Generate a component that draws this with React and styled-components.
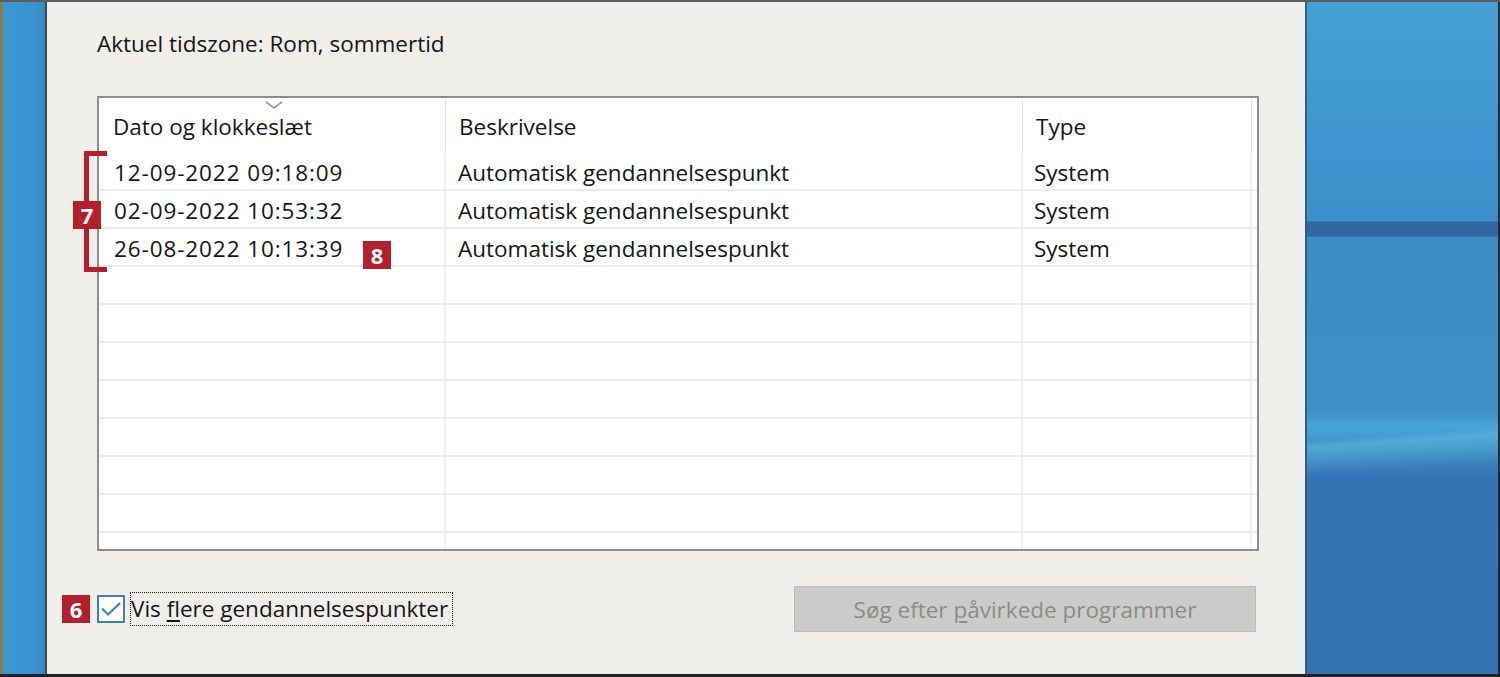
import React from 'react';
import styled, { createGlobalStyle } from 'styled-components';

const GlobalStyle = createGlobalStyle`
  html, body {
    margin: 0;
    padding: 0;
    background: #1e1e1e;
  }
  body {
    font-family: "Open Sans", "DejaVu Sans", sans-serif;
  }
`;

const RED = '#b51f2b';
const FONT_SIZE = '22.5px';

const Frame = styled.div`
  width: 1500px;
  height: 677px;
  display: flex;
  box-sizing: border-box;
  border-top: 2px solid #5d5d5d;
  border-bottom: 3px solid #222;
  overflow: hidden;
`;

const LeftStrip = styled.div`
  width: 47px;
  flex: none;
  box-sizing: border-box;
  border-left: 3px solid #8a7c4e;
  border-right: 2px solid #3f4a52;
  background: linear-gradient(90deg, #3b97d1 0%, #3a93cf 80%, #3787c2 100%);
`;

const Dialog = styled.div`
  flex: 1;
  background: #f0efec;
  position: relative;
  padding: 26px 46px 0 50px;
  display: flex;
  flex-direction: column;
`;

const Desktop = styled.div`
  width: 196px;
  flex: none;
  box-sizing: border-box;
  border-left: 2px solid #2c5f8e;
  border-right: 3px solid #2a2a2a;
  background:
    linear-gradient(176deg, transparent 0 64%, rgba(110, 190, 235, 0.45) 65%, transparent 69%),
    linear-gradient(180deg,
      #45a0d6 0px, #3f95cf 150px, #3c8fc9 219px,
      #2f67a5 220px, #2f67a5 234px,
      #3d8cc5 235px, #3f90c8 410px,
      #48a6da 424px, #3f95cc 440px, #3a85c0 458px, #3474b5 476px, #3372b3 677px);
`;

const Timezone = styled.div`
  font-size: ${FONT_SIZE};
  color: #161616;
  height: 32px;
  line-height: 32px;
`;

const ListView = styled.div`
  margin-top: 36px;
  width: 1162px;
  height: 455px;
  box-sizing: border-box;
  border: 2px solid #8e8e8e;
  background: #fff;
  overflow: hidden;
  position: relative;
`;

const COLS = '347px 577px 229px 5px';

const HeaderRow = styled.div`
  display: grid;
  grid-template-columns: ${COLS};
  height: 55px;
`;

const HeaderCell = styled.div`
  position: relative;
  font-size: ${FONT_SIZE};
  color: #161616;
  padding-left: ${(p) => p.$pad ?? 13}px;
  display: flex;
  align-items: center;
  padding-top: 1px;
  border-right: ${(p) => (p.$last ? 'none' : '1px solid #e3e3e3')};
  margin: 2px 0 2px;
`;

const SortArrow = styled.svg`
  position: absolute;
  top: 1px;
  left: 166px;
`;

const BodyRow = styled.div`
  display: grid;
  grid-template-columns: ${COLS};
  height: 38px;
  box-sizing: border-box;
  border-bottom: 2px solid #ececec;
`;

const Cell = styled.div`
  font-size: ${FONT_SIZE};
  color: #161616;
  letter-spacing: ${(p) => p.$spacing || 0}px;
  padding-left: ${(p) => p.$pad ?? 12}px;
  padding-top: 3px;
  display: flex;
  align-items: center;
  white-space: nowrap;
  border-right: ${(p) => (p.$last ? 'none' : '2px solid #efefef')};
`;

const Footer = styled.div`
  margin-top: 35px;
  width: 1162px;
  display: flex;
  align-items: center;
  justify-content: space-between;
`;

const CheckRow = styled.label`
  display: flex;
  align-items: center;
  gap: 5px;
`;

const CheckBox = styled.span`
  width: 28px;
  height: 28px;
  box-sizing: border-box;
  border: 2px solid #3d7fc1;
  background: #fff;
  display: flex;
  align-items: center;
  justify-content: center;
`;

const CheckLabel = styled.span`
  font-size: ${FONT_SIZE};
  color: #161616;
  border: 1px dotted #222;
  padding: 1px 4px 2px 0;
  line-height: 29px;

  u {
    text-decoration-thickness: 2px;
    text-underline-offset: 3px;
  }
`;

const Button = styled.button`
  width: 462px;
  height: 46px;
  margin-right: 3px;
  background: #cbcbca;
  border: 1px solid #bdbdbc;
  font-family: inherit;
  font-size: ${FONT_SIZE};
  color: #8b8b8b;
  padding: 0;

  u {
    text-decoration-thickness: 2px;
    text-underline-offset: 3px;
  }
`;

const Badge = styled.div`
  position: absolute;
  width: 28px;
  height: 28px;
  left: ${(p) => p.$x}px;
  top: ${(p) => p.$y}px;
  background: ${RED};
  color: #fff;
  font-family: "Open Sans", "DejaVu Sans", sans-serif;
  font-weight: 700;
  font-size: 22px;
  line-height: 28px;
  text-align: center;
  z-index: 2;
`;

const Bracket = styled.div`
  position: absolute;
  left: 37px;
  top: 149px;
  width: 23px;
  height: 121px;
  box-sizing: border-box;
  border: 5px solid ${RED};
  border-right: none;
  z-index: 1;
`;

const rows = [
  ['12-09-2022 09:18:09', 'Automatisk gendannelsespunkt', 'System'],
  ['02-09-2022 10:53:32', 'Automatisk gendannelsespunkt', 'System'],
  ['26-08-2022 10:13:39', 'Automatisk gendannelsespunkt', 'System'],
];

export default function App() {
  const filled = [...rows];
  while (filled.length < 11) filled.push(['', '', '']);

  return (
    <>
      <GlobalStyle />
      <Frame>
        <LeftStrip />
        <Dialog>
          <Timezone>Aktuel tidszone: Rom, sommertid</Timezone>
          <ListView>
            <HeaderRow>
              <HeaderCell $pad={14}>
                <SortArrow width="18" height="8" viewBox="0 0 18 8">
                  <path d="M1 1 L9 7 L17 1" fill="none" stroke="#9a9a9a" strokeWidth="1.6" />
                </SortArrow>
                Dato og klokkeslæt
              </HeaderCell>
              <HeaderCell>Beskrivelse</HeaderCell>
              <HeaderCell>Type</HeaderCell>
              <HeaderCell $last $pad={0} />
            </HeaderRow>
            {filled.map((r, i) => (
              <BodyRow key={i}>
                <Cell $pad={15} $spacing={0.9}>{r[0]}</Cell>
                <Cell $pad={12}>{r[1]}</Cell>
                <Cell $pad={11}>{r[2]}</Cell>
                <Cell $last $pad={0} />
              </BodyRow>
            ))}
          </ListView>
          <Footer>
            <CheckRow>
              <CheckBox>
                <svg width="22" height="18" viewBox="0 0 22 18">
                  <path d="M2 8.5 L8 14.5 L20 3" fill="none" stroke="#3d7fc1" strokeWidth="2.2" />
                </svg>
              </CheckBox>
              <CheckLabel>
                Vis <u>f</u>lere gendannelsespunkter
              </CheckLabel>
            </CheckRow>
            <Button>
              Søg efter <u>p</u>åvirkede programmer
            </Button>
          </Footer>
          <Bracket />
          <Badge $x={26} $y={199}>7</Badge>
          <Badge $x={316} $y={239}>8</Badge>
          <Badge $x={15} $y={593}>6</Badge>
        </Dialog>
        <Desktop />
      </Frame>
    </>
  );
}
